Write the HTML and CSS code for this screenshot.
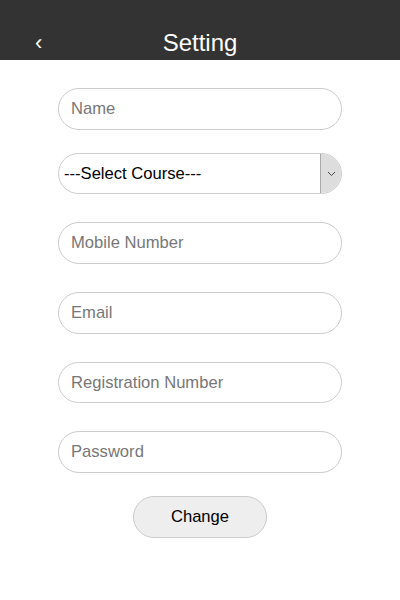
FILE: index.html
```html
<!DOCTYPE html>
<html>
<head>
<meta charset="utf-8">
<link rel="stylesheet" href="styles.css">
</head>
<body>
<header class="topbar">
  <span class="back">&#8249;</span>
  <h1 class="title">Setting</h1>
</header>
<form class="form">
  <input class="field" type="text" placeholder="Name">
  <div class="select">
    <span class="select-text">---Select Course---</span>
    <span class="select-arrow">
      <svg width="9" height="6" viewBox="0 0 9 6"><path d="M1 1 L4.5 4.5 L8 1" fill="none" stroke="#444" stroke-width="1"/></svg>
    </span>
  </div>
  <input class="field" type="text" placeholder="Mobile Number">
  <input class="field" type="text" placeholder="Email">
  <input class="field field-short" type="text" placeholder="Registration Number">
  <input class="field" type="password" placeholder="Password">
  <button class="btn" type="button">Change</button>
</form>
</body>
</html>
```
FILE: styles.css
```css
* { box-sizing: border-box; }
body {
  margin: 0;
  background: #fff;
  font-family: "Liberation Sans", Arial, sans-serif;
}
.topbar {
  height: 60px;
  background: #333333;
  color: #fff;
  display: flex;
  align-items: flex-end;
  justify-content: center;
  position: relative;
  padding-bottom: 3px;
}
.title {
  margin: 0;
  font-size: 24px;
  font-weight: normal;
  line-height: 28px;
}
.back {
  position: absolute;
  left: 35px;
  bottom: 6px;
  font-size: 22px;
  line-height: 22px;
}
.form {
  display: flex;
  flex-direction: column;
  align-items: center;
  padding-top: 28px;
  gap: 28px;
}
.field, .select {
  width: 284px;
  height: 42px;
  border: 1px solid #cccccc;
  border-radius: 21px;
  background: #fff;
  font-family: "Liberation Sans", Arial, sans-serif;
  font-size: 16.6px;
  padding: 0 12px;
  color: #333;
  outline: none;
}
.field-short { height: 41px; }
.field::placeholder { color: #777; }
.select {
  height: 41px;
  margin-top: -5px;
  padding: 0 0 0 5px;
  display: flex;
  align-items: center;
  overflow: hidden;
  color: #000;
}
.select-text { flex: 1; }
.select-arrow {
  width: 21px;
  height: 100%;
  background: #dddddd;
  border-left: 1px solid #aaa;
  display: flex;
  align-items: center;
  justify-content: center;
}
.btn {
  width: 134px;
  height: 42px;
  border: 1px solid #cccccc;
  border-radius: 21px;
  background: #eeeeee;
  font-family: "Liberation Sans", Arial, sans-serif;
  font-size: 16.6px;
  color: #000;
  margin-top: -5px;
}
```
